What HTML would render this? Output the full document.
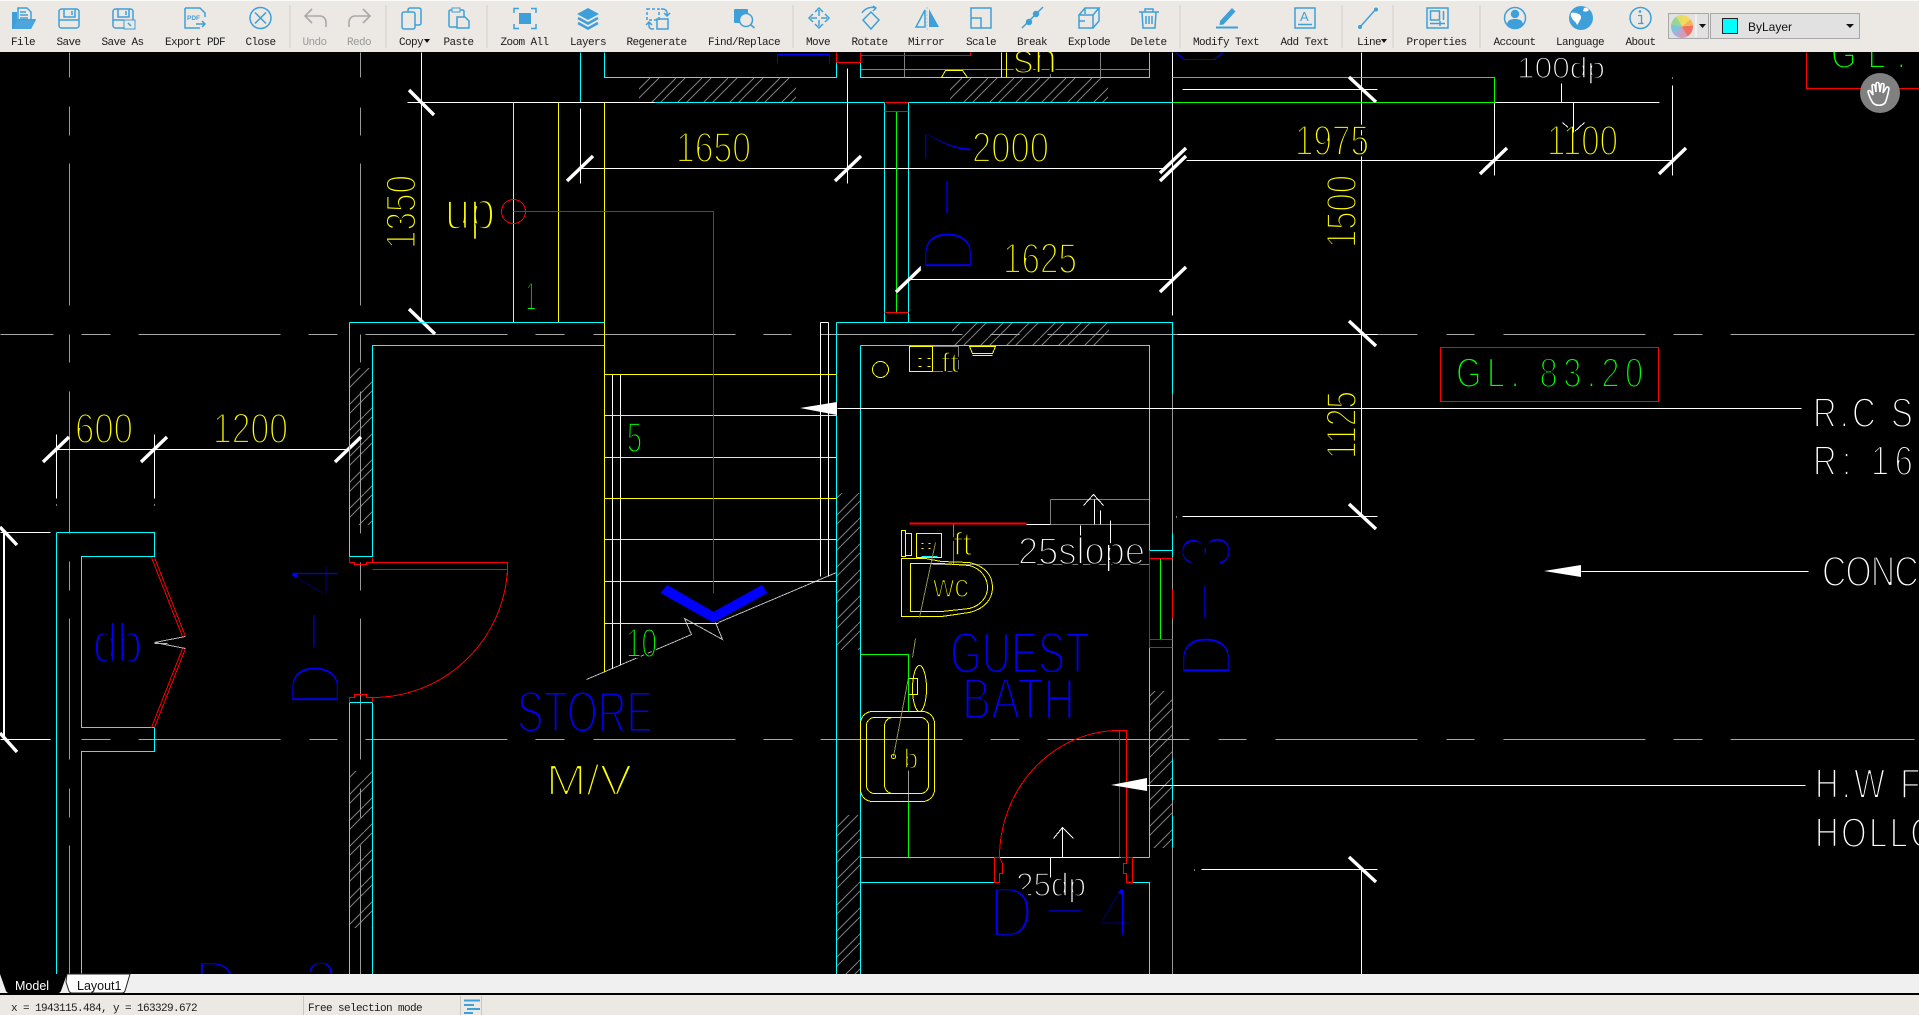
<!DOCTYPE html>
<html lang="en"><head><meta charset="utf-8"><title>CAD Viewer</title>
<style>
html,body{margin:0;padding:0;background:#000;width:1919px;height:1015px;overflow:hidden}
svg{position:absolute;left:0;top:0;display:block}
.c path,.c rect,.c circle,.c ellipse{fill:none}
.t{font-family:"Liberation Sans",sans-serif;stroke:#000;stroke-width:.05em}
.d{font-family:"Liberation Sans",sans-serif;stroke:#000;stroke-width:4.5px;font-size:72px;fill:#00f}
.y{fill:#ff0}.g{fill:#0f0}.b{fill:#00f}.w{fill:#fff}
.l{font-family:"Liberation Mono",monospace;font-size:11px;letter-spacing:-.6px;fill:#1c1c1c;text-anchor:middle}
.ic{fill:none;stroke:#3f9fd8;stroke-width:1.5}
.fl{fill:#3f9fd8;stroke:none}
#wheel{position:absolute;left:1671px;top:15px;width:22px;height:23px;border-radius:50%;background:conic-gradient(#f4d860 0 50deg,#f5b35a 50deg 85deg,#ef6f62 85deg 150deg,#d49bb8 150deg 195deg,#b4a7dc 195deg 230deg,#7fc4d8 230deg 280deg,#9bd49a 280deg 330deg,#d9e06a 330deg 360deg)}
</style></head><body>
<svg width="1919" height="1015" viewBox="0 0 1919 1015" xmlns="http://www.w3.org/2000/svg">
<defs>
<pattern id="h" patternUnits="userSpaceOnUse" width="26" height="26"><path d="M0 26L26 0M9 26L26 9M0 9L9 0" stroke="#808080" stroke-width="1" fill="none"/></pattern>
</defs>
<rect width="1919" height="1015" fill="#000"/>
<!-- hatches -->
<g fill="url(#h)">
<rect x="639" y="77" width="157" height="25"/><rect x="950" y="77" width="158" height="25"/>
<rect x="349" y="368" width="23" height="157"/><rect x="349" y="771" width="23" height="157"/>
<rect x="952" y="322" width="157" height="23"/>
<rect x="836" y="493" width="24" height="157"/><rect x="836" y="815" width="24" height="160"/>
<rect x="1149" y="691" width="23" height="157"/>
</g>
<g class="c" shape-rendering="crispEdges" transform="translate(.5 .5)" stroke-width="1">
<!-- dashed gray -->
<path stroke="#a8a8a8" d="M0 334H53M81 334H110M138 334H280M308 334H337M365 334H507M535 334H564M593 334H735M763 334H791M820 334H962M990 334H1019M1047 334H1177M1377 334H1417M1446 334H1474M1503 334H1645M1673 334H1702M1730 334H1914
M81 739H110M138 739H280M309 739H337M365 739H507M535 739H564M593 739H735M763 739H792M820 739H962M990 739H1019M1047 739H1189M1218 739H1246M1275 739H1417M1446 739H1474M1503 739H1645M1673 739H1702M1730 739H1914"/>
<path stroke="#999" d="M69 52V77M69 106V135M69 163V305M69 334V362M69 391V533M69 561V590M69 618V759M69 788V817M69 845V975
M360 52V77M360 107V135M360 163V305M360 334V362M360 391V533M360 562V590M360 618V759M360 788V817M360 845V975
M1172 322V975M908 770V857"/>
<path stroke="#808080" d="M860 69H1149M904 52V77M1050 52V77M1100 52V77M1050 499H1149M1050 499V524M1050 524H1149M932 564H1149M953 524V564M932 346H958V371H932"/>
<path stroke="#bbb" d="M586 679L691 634L684 618L722 639L715 622M718 622L836 572M154 642L185 636M154 642L185 648M154 643H167"/>
<!-- cyan -->
<path stroke="#0ff" d="M580 52V102M604 52V77H836V52M860 52V77H1149V52M654 102H1172M884 102V322M908 102V322
M349 322H604V345H372V556H349V322M349 702H372M349 702V975M372 702V975
M56 532H154V556H81V727H154V751H81V975M56 532V975
M836 322H1172V345M836 322V975M860 345H1149V857M860 345V975M860 857H999M1120 857H1149M860 882H994M1131 882H1149V975
M1149 550H1172M1149 647H1172M1172 322V393M1172 533V556M1172 758V800M1172 815V847M921 533H937M921 556H937"/>
<!-- white lines -->
<path stroke="#fff" d="M421 52V322M407 102H654M1494 102H1659M580 108V183M847 68V183M580 168H1163M1186 160H1672
M1494 102V175M1672 85V175M1672 77V78M909 279H1172M1172 52V315M1361 52V516M1361 869V975M1182 89H1377M1182 516H1377M1176 516V517M1201 869H1377M1194 869V870M1177 334H1377
M1561 83V102M1573 102V132M1562 122L1573 132L1584 122
M0 532H50M0 739H50M3 532V739M4 532V739M56 434V498M56 504V505M154 434V498M154 504V505M56 449H349M349 437V530
M612 374V668M620 374V665M820 322V576M828 322V576M820 322H828
M837 408H1801M1147 785H1805M1581 571H1808
M999 857H1120M1026 524H1050M1094 499V524M1100 510V524M1083 505L1093 494L1103 505M1062 857V827M1053 838L1062 827L1073 838M1050 857V877M1080 525V540M1110 520V570"/>
<!-- yellow -->
<path stroke="#ff0" d="M513 102V322M558 102V322M604 102V672M604 374H836M604 415H836M604 457H836M604 498H836M604 539H836M604 581H836M604 623H718
M909 346H932V371H909ZM969 346H995L992 353H972ZM972 355H992M941 77L945 70H962L967 77ZM1001 52V77M1006 52V77
M916 533H941V557H916ZM901 530H905V556H901ZM905 533H911V555H905Z
M901 558V616H941L969 612C985 608 992 598 992 587C992 575 985 566 969 562L941 561L925 558Z
M910 563V611H941L969 608C980 605 987 597 987 587C987 577 980 568 969 565L941 563Z
M908 678H917V694H908Z"/>
<rect x="860" y="711" width="74" height="90" rx="12" stroke="#ff0"/>
<rect x="866" y="717" width="62" height="76" rx="8" stroke="#ff0"/>
<path stroke="#ff0" d="M893 717C887 717 884 721 884 726V784C884 789 887 793 893 793"/>
<ellipse cx="919" cy="688" rx="7" ry="23" stroke="#ff0"/>
<ellipse cx="880" cy="369" rx="8" ry="8" stroke="#ff0"/>
<circle cx="893" cy="756" r="2" stroke="#ff0"/>
<path stroke="#ff0" d="M918 358H921M927 358H930M918 366H921M927 366H930M921 543H923M928 543H930M921 548H923M928 548H930"/>
<!-- olive -->
<path stroke="#8f8f50" d="M935 542L919 617M915 638L912 657M908 677L893 756"/>
<!-- green -->
<path stroke="#0f0" d="M1172 77H1494V102H1172M896 111V313M1160 558V639M860 654H908V711M908 801V857"/>
<!-- red -->
<path stroke="#f00" d="M836 62V52M836 62H860V52M860 55H970V52M884 102H908M884 111H908M884 312H908M1149 550V647H1172M1149 558H1172M1149 639H1172M1172 589V618
M513 211H713V593M372 557V562H366V564H354V562H349V557M372 562H507V575M372 569H507M507 569A135 135 0 0 1 372 697M349 702V697H354V694H366V697H372V702
M151 557L182 636M154 557L185 636M185 648L154 727M182 648L151 727
M999 857A120 127 0 0 1 1119 730H1126V857M1119 730V857M994 857H999L1002 863V873H999V882H994V857M1120 857H1132V882H1126V873H1123V863H1126V857"/>
<circle cx="513" cy="211" r="12" stroke="#f00"/>
<rect x="1440" y="347" width="218" height="54" stroke="#f00"/>
<path stroke="#f00" d="M1806 52V88H1919"/>
<path stroke="#f00" stroke-width="2" d="M909 523H1026"/>
<!-- blue bits -->
<path stroke="#00f" d="M777 63V54H829V63M1175 52L1184 59H1214L1222 52"/>
</g>
<!-- thick ticks -->
<g stroke="#fff" stroke-width="3.4" fill="none" stroke-linecap="butt">
<path d="M409 90L434 115M409 309L435 334M567 181L593 156M835 181L861 156M1160 181L1186 156M1160 173L1186 148M1480 174L1507 148M1659 174L1686 148M1349 77L1376 102M1349 321L1376 346M1349 504L1376 529M1349 857L1376 882M43 462L69 437M141 462L167 437M335 462L361 437M0 527L17 545M0 733L17 752M896 292L922 267M1160 292L1186 267"/>
</g>
<polygon fill="#fff" points="800,408 837,402 837,415"/><polygon fill="#fff" points="1111,785 1147,778 1147,791"/><polygon fill="#fff" points="1544,571 1581,565 1581,577"/>
<polygon fill="#00f" points="660.4,593 667.3,585 713.5,611.7 762,585 767.3,593 713.5,622.7"/>
<!-- CAD text -->
<g>
<text class="t y" x="676" y="162" font-size="43" textLength="75" lengthAdjust="spacingAndGlyphs">1650</text>
<text class="t y" x="972" y="162" font-size="43" textLength="77" lengthAdjust="spacingAndGlyphs">2000</text>
<text class="t y" x="1003" y="273" font-size="43" textLength="74" lengthAdjust="spacingAndGlyphs">1625</text>
<text class="t y" x="1295" y="155" font-size="43" textLength="74" lengthAdjust="spacingAndGlyphs">1975</text>
<text class="t y" x="1547" y="155" font-size="43" textLength="71" lengthAdjust="spacingAndGlyphs">1100</text>
<text class="t y" x="75" y="443" font-size="43" textLength="58" lengthAdjust="spacingAndGlyphs">600</text>
<text class="t y" x="213" y="443" font-size="43" textLength="75" lengthAdjust="spacingAndGlyphs">1200</text>
<text class="t y" transform="translate(415.5 249) rotate(-90)" font-size="43" textLength="74" lengthAdjust="spacingAndGlyphs">1350</text>
<text class="t y" transform="translate(1356 248) rotate(-90)" font-size="43" textLength="73" lengthAdjust="spacingAndGlyphs">1500</text>
<text class="t y" transform="translate(1356 459) rotate(-90)" font-size="43" textLength="68" lengthAdjust="spacingAndGlyphs">1125</text>
<text class="t y" x="445" y="229" font-size="54" textLength="50" lengthAdjust="spacingAndGlyphs">up</text>
<text class="t g" x="526" y="310" font-size="40" textLength="10" lengthAdjust="spacingAndGlyphs">1</text>
<text class="t g" x="627" y="452" font-size="43" textLength="15" lengthAdjust="spacingAndGlyphs">5</text>
<text class="t g" x="626" y="657" font-size="41" textLength="31" lengthAdjust="spacingAndGlyphs">10</text>
<text class="t b" x="93" y="662" font-size="56" textLength="49" lengthAdjust="spacingAndGlyphs">db</text>
<text class="t b" x="517" y="732" font-size="58" textLength="136" lengthAdjust="spacingAndGlyphs">STORE</text>
<text class="t y" x="546" y="795" font-size="44" textLength="86" lengthAdjust="spacingAndGlyphs">M/V</text>
<text class="t b" x="950" y="673" font-size="58" textLength="140" lengthAdjust="spacingAndGlyphs">GUEST</text>
<text class="t b" x="962" y="719" font-size="58" textLength="113" lengthAdjust="spacingAndGlyphs">BATH</text>
<text class="t y" x="933" y="597" font-size="33" textLength="36" lengthAdjust="spacingAndGlyphs">wc</text>
<text class="t y" x="953" y="555" font-size="32" textLength="19" lengthAdjust="spacingAndGlyphs">ft</text>
<text class="t y" x="941" y="372" font-size="28" textLength="18" lengthAdjust="spacingAndGlyphs">ft</text>
<text class="t y" x="904" y="768" font-size="28" textLength="14" lengthAdjust="spacingAndGlyphs">b</text>
<text class="t y" x="1013" y="73" font-size="43" textLength="44" lengthAdjust="spacingAndGlyphs">sh</text>
<text class="t w" x="1018" y="564" font-size="38" textLength="127" lengthAdjust="spacingAndGlyphs">25slope</text>
<text class="t w" x="1016" y="896" font-size="33" textLength="70" lengthAdjust="spacingAndGlyphs">25dp</text>
<text class="t w" x="1517" y="78" font-size="30" textLength="88" lengthAdjust="spacingAndGlyphs">100dp</text>
<text class="t g" transform="translate(1456 387) scale(.78 1)" font-size="42" textLength="240" lengthAdjust="spacing">GL. 83.20</text>
<text class="t g" transform="translate(1831 68) scale(.78 1)" font-size="42" textLength="96" lengthAdjust="spacing">GL.</text>
<text class="t w" transform="translate(1813 427) scale(.78 1)" font-size="42" textLength="128" lengthAdjust="spacing">R.C S</text>
<text class="t w" transform="translate(1813 475) scale(.78 1)" font-size="42" textLength="128" lengthAdjust="spacing">R: 16</text>
<text class="t w" transform="translate(1822 586) scale(.78 1)" font-size="43" textLength="154" lengthAdjust="spacing">CONCR</text>
<text class="t w" transform="translate(1815 798) scale(.78 1)" font-size="42" textLength="135" lengthAdjust="spacing">H.W F</text>
<text class="t w" transform="translate(1815 847) scale(.78 1)" font-size="42" textLength="155" lengthAdjust="spacing">HOLLO</text>
<!-- D-x tags -->
<g transform="translate(340 701) rotate(-90)"><text class="d" transform="scale(.85 1)" x="-7">D</text><text class="d" transform="scale(.85 1)" x="122">4</text><text class="d" transform="scale(2.5 1)" x="16" y="-7">-</text></g>
<g transform="translate(973 267) rotate(-90)"><text class="d" transform="scale(.85 1)" x="-7">D</text><text class="d" transform="scale(.85 1)" x="122">7</text><text class="d" transform="scale(2.5 1)" x="16" y="-7">-</text></g>
<g transform="translate(1231 672) rotate(-90)"><text class="d" transform="scale(.85 1)" x="-7">D</text><text class="d" transform="scale(.85 1)" x="122">3</text><text class="d" transform="scale(2.5 1)" x="16" y="-7">-</text></g>
<g transform="translate(995 937)"><text class="d" transform="scale(.85 1)" x="-7">D</text><text class="d" transform="scale(.85 1)" x="122">4</text><text class="d" transform="scale(2.5 1)" x="16" y="-7">-</text></g>
<g transform="translate(200 1011)"><text class="d" transform="scale(.85 1)" x="-7">D</text><text class="d" transform="scale(.85 1)" x="122">2</text><text class="d" transform="scale(2.5 1)" x="16" y="-7">-</text></g>
</g>
<!-- redraws over text halos -->
<g shape-rendering="crispEdges" transform="translate(.5 .5)" fill="none">
<path stroke="#fff" d="M1660 408H1801M1573 102V132M1361 380V470M1062 857V827"/>
<path stroke="#0ff" d="M349 322H604M349 322V556"/>
</g>
<!-- hand button -->
<circle cx="1880" cy="93" r="20" fill="#808080"/>
<path d="M1873 103C1870 99 1869 95 1868 92C1868 90 1870 90 1871 92L1873 95L1872 86C1872 84 1874 84 1875 86L1876 92L1876 84C1876 82 1879 82 1879 84L1880 92L1881 85C1881 83 1884 83 1884 85L1883 93L1886 88C1887 86 1889 87 1889 89C1888 94 1887 99 1885 103C1882 106 1876 106 1873 103Z" fill="#808080" stroke="#fff" stroke-width="1.6"/>
<!-- toolbar -->
<rect x="0" y="0" width="1919" height="52" fill="#ece9e4"/>
<rect x="0" y="0" width="1919" height="1" fill="#fbfbfa"/>
<g stroke="#d2cfca" stroke-width="1"><path d="M290 5V48M386 5V48M487 5V48M793 5V48M1180 5V48M1342 5V48M1393 5V48M1480 5V48"/></g>
<!-- icons -->
<path d="M18 8h9l4 4v8H18z" fill="#e8f2f9" class="ic"/><path class="ic" stroke-width="1" d="M20 12h6M20 15h8M20 18h8"/>
<path class="fl" d="M12 12h5v7h19l-5 10H12z"/><path d="M13 29l4-9h19l-5 9z" fill="#4aa6dd"/>
<rect class="ic" x="59" y="9" width="20" height="19" rx="2.5"/><path class="ic" d="M64 9v8h11V9M72 11v4M59 20h20"/>
<rect class="ic" x="113" y="9" width="20" height="19" rx="2.5"/><path class="ic" d="M118 9v8h11V9M126 11v4M113 20h11"/>
<rect x="124" y="20" width="11" height="9" fill="#ece9e4" stroke="#3f9fd8"/><path class="ic" d="M128 23l3 3"/>
<path class="ic" d="M185 8h15l5 5v4M185 8v20h15"/><path class="ic" d="M196 24h9m-3-3 3 3-3 3"/>
<text x="187" y="20" font-family="Liberation Sans,sans-serif" font-size="6.5" font-weight="700" fill="#3f9fd8">PDF</text>
<circle class="ic" cx="260.5" cy="18" r="10.5"/><path class="ic" d="M255 12.5l11 11M266 12.5l-11 11"/>
<path d="M306 16h14a6 6 0 0 1 6 6v5M312 9l-7 7 7 7" fill="none" stroke="#a9a9a9" stroke-width="1.6"/>
<path d="M369 16h-14a6 6 0 0 0-6 6v5M363 9l7 7-7 7" fill="none" stroke="#a9a9a9" stroke-width="1.6"/>
<rect class="ic" x="408" y="8" width="13" height="17" rx="2"/><rect class="ic" x="402" y="12" width="13" height="17" rx="2" style="fill:#ece9e4"/>
<rect class="ic" x="449" y="10" width="15" height="17" rx="1.5"/><rect x="452" y="8" width="8" height="4" fill="#ece9e4" stroke="#3f9fd8"/><path d="M457 17h8l4 4v7h-12z" fill="#ece9e4" stroke="#3f9fd8" stroke-width="1.5"/>
<rect class="fl" x="519" y="13" width="12" height="11"/><path class="ic" d="M514 13V8.5h5M531 8.5h5V13M536 24v4.5h-5M519 28.5h-5V24"/>
<path class="fl" d="M588 8l11 6-11 6-11-6z"/><path d="M578 18l10 5.5 10-5.5M578 23l10 5.5 10-5.5" fill="none" stroke="#3f9fd8" stroke-width="2.6"/>
<rect class="ic" x="647" y="9" width="12" height="11" stroke-dasharray="3 2"/><rect class="ic" x="657" y="19" width="11" height="10"/>
<path class="ic" d="M661 9h2a4 4 0 0 1 4 4v3m-3-3 3 3 3-3M654 29h-2a3 3 0 0 1-3-3v-4m-3 3 3-3 3 3"/>
<rect class="fl" x="734" y="9" width="14" height="14" rx="1"/><circle cx="746" cy="20" r="6.5" fill="#ece9e4" stroke="#3f9fd8" stroke-width="1.5"/><path class="ic" d="M751 25l3.5 3"/>
<path class="ic" d="M819 10v6M819 20v6M811 18h6M821 18h6M815 12l4-4 4 4M815 24l4 4 4-4M813 14l-4 4 4 4M825 14l4 4-4 4"/>
<path class="ic" d="M871 12l8 8-8 9-8-9zM862 13a12 12 0 0 1 14-5m-3-2 3 2-3 3"/>
<path class="ic" d="M925 10l-9 17h9z"/><path class="fl" d="M929 9l10 18h-10z"/><path d="M927 7v23" stroke="#9cc9e6" stroke-dasharray="2 1.5" fill="none"/>
<path class="ic" d="M971 8h20v20h-20zM971 18h10v10"/>
<path class="ic" d="M1022 28L1043 7"/><circle class="fl" cx="1029" cy="22" r="3.2"/><circle class="fl" cx="1036" cy="14" r="3.2"/>
<path class="ic" d="M1079 15h14v13h-14zM1079 15l6-7h14l-6 7M1099 8v13l-6 7M1085 8v6M1085 21h-6"/>
<path class="ic" d="M1139 12h20M1145 12V9h8v3M1142 12l1 16h12l1-16M1146 16v8M1149 16v8M1152 16v8"/>
<path class="fl" d="M1220 21l12-13 3.5 3.5-12 13-4 .5z"/><path d="M1216 27.5h22" stroke="#3f9fd8" stroke-width="2"/>
<rect class="ic" x="1295" y="8" width="20" height="20"/><path class="ic" d="M1298 24.5h14"/>
<text x="1300" y="21" font-family="Liberation Sans,sans-serif" font-size="13" fill="#3f9fd8">A</text>
<path class="ic" d="M1360 27L1376 9"/><circle class="fl" cx="1360" cy="27" r="2"/><circle class="fl" cx="1376" cy="9.5" r="2"/>
<rect class="ic" x="1427" y="8" width="21" height="20"/><rect class="ic" x="1430.5" y="11" width="9" height="9"/><path class="ic" d="M1443.5 11v9M1430 23.5h15M1440 21v5"/>
<circle class="ic" cx="1515" cy="18" r="10.5"/><circle class="fl" cx="1515" cy="14" r="4.2"/><path class="fl" d="M1507 25c0-5 4-6 8-6s8 1 8 6c-2 2-5 3.5-8 3.5s-6-1.5-8-3.5z"/>
<circle class="fl" cx="1581" cy="18" r="12"/><path d="M1571 13c3-1 5 0 8 1 2 1 3 4 1 6-1 2-2 4-3 5-1-3-3-4-4-5-1-2-3-4-2-7zM1584 8c2-1 4 0 5 2-2 2-4 2-6 1z" fill="#fff"/>
<circle class="ic" cx="1640.5" cy="18" r="10.5"/><path d="M1638 15.500h3.500v7.500h1.500M1638 23.500h5.500" fill="none" stroke="#3f9fd8" stroke-width="1.3"/><circle class="fl" cx="1640" cy="11.5" r="1.3"/>
<!-- labels -->
<g>
<text class="l" x="23" y="45">File</text><text class="l" x="68.5" y="45">Save</text><text class="l" x="122.5" y="45">Save As</text><text class="l" x="195" y="45">Export PDF</text><text class="l" x="260.5" y="45">Close</text>
<text class="l" x="314.5" y="45" style="fill:#9a9a9a">Undo</text><text class="l" x="359" y="45" style="fill:#9a9a9a">Redo</text>
<text class="l" x="411" y="45">Copy</text><text class="l" x="458.5" y="45">Paste</text><text class="l" x="524.5" y="45">Zoom All</text><text class="l" x="588" y="45">Layers</text><text class="l" x="656.5" y="45">Regenerate</text><text class="l" x="744" y="45">Find/Replace</text>
<text class="l" x="818" y="45">Move</text><text class="l" x="869.5" y="45">Rotate</text><text class="l" x="926" y="45">Mirror</text><text class="l" x="981" y="45">Scale</text><text class="l" x="1032" y="45">Break</text><text class="l" x="1089" y="45">Explode</text><text class="l" x="1148.5" y="45">Delete</text>
<text class="l" x="1226" y="45">Modify Text</text><text class="l" x="1304.5" y="45">Add Text</text><text class="l" x="1369" y="45">Line</text><text class="l" x="1436.5" y="45">Properties</text><text class="l" x="1514.5" y="45">Account</text><text class="l" x="1580" y="45">Language</text><text class="l" x="1640.5" y="45">About</text>
</g>
<path d="M424 39h6l-3 4zM1381 39h6l-3 4z" fill="#111"/>
<!-- colour + bylayer -->
<rect x="1668.5" y="13.5" width="40" height="25" fill="#e1e1e1" stroke="#a8a8a8"/><path d="M1696 15v22" stroke="#fff"/><path d="M1699 24h7l-3.500 4z" fill="#111"/>
<rect x="1710.5" y="13.5" width="149" height="25" fill="#e1e1e1" stroke="#a8a8a8"/>
<rect x="1722.5" y="18.5" width="15" height="15" fill="#0ff" stroke="#222"/>
<text x="1748" y="31" font-family="Liberation Sans,sans-serif" font-size="12" fill="#111">ByLayer</text>
<path d="M1846 24h8l-4 4z" fill="#111"/>
<!-- tab bar -->
<rect x="0" y="974" width="1919" height="19" fill="#f0f0f0"/>
<rect x="0" y="993" width="1919" height="2" fill="#000"/>
<path d="M0 974H67L61 991Q60 993 58 993H9Q7 993 6 991Z" fill="#000"/>
<path d="M67 974H130L125 991Q124 993 122 993H72Q70 993 69 991L66 982Z" fill="#fff" stroke="#222" stroke-width="1"/>
<text x="15" y="990" font-family="Liberation Sans,sans-serif" font-size="12.5" fill="#fff">Model</text>
<text x="77" y="990" font-family="Liberation Sans,sans-serif" font-size="12.5" fill="#111">Layout1</text>
<!-- status bar -->
<rect x="0" y="995" width="1919" height="20" fill="#ece9e4"/>
<path d="M303.5 996V1015M460.5 996V1015M481.5 996V1015" stroke="#c9c6c1"/>
<text x="11" y="1011" font-family="Liberation Mono,monospace" font-size="11" letter-spacing="-.6" fill="#1c1c1c">x = 1943115.484, y = 163329.672</text>
<text x="308" y="1011" font-family="Liberation Mono,monospace" font-size="11" letter-spacing="-.6" fill="#1c1c1c">Free selection mode</text>
<path d="M464 1000.500h16M464 1005h10M467 1009h13M464 1013h9" stroke="#3f9fd8" stroke-width="2"/>
</svg>
<div id="wheel"></div>
</body></html>
